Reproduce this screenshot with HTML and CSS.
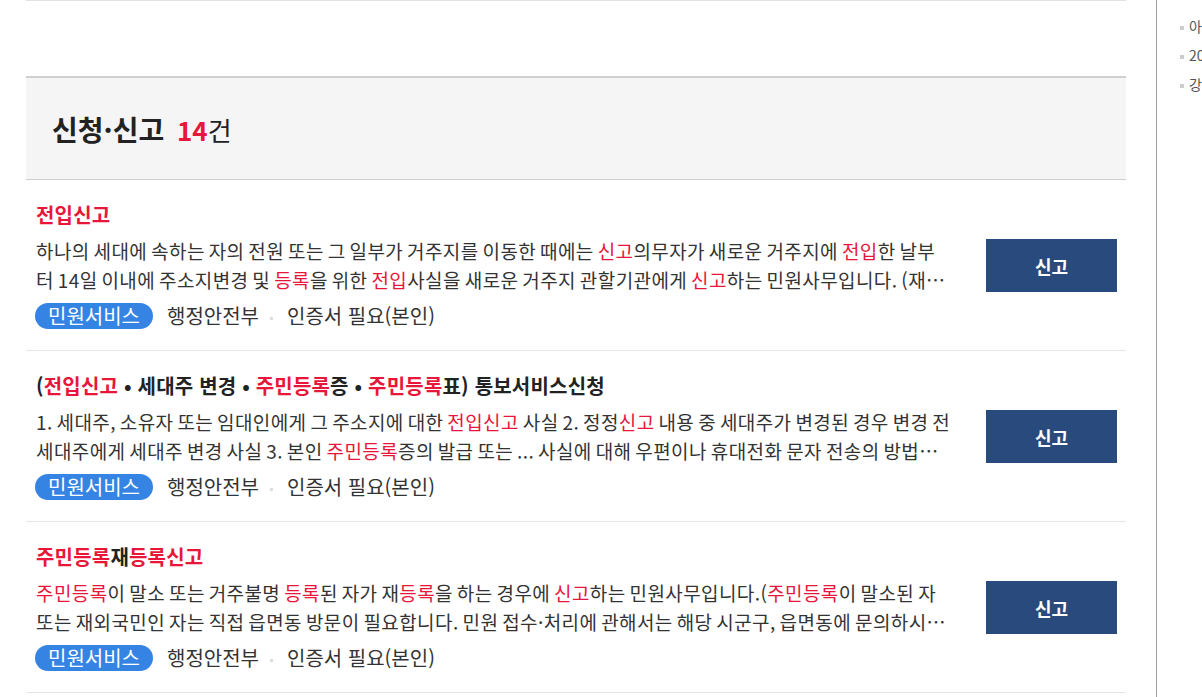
FILE: index.html
```html
<!DOCTYPE html>
<html lang="ko">
<head>
    <meta charset="UTF-8">
    <meta name="viewport" content="width=device-width, initial-scale=1.0">
    <title>신청·신고 검색결과</title>
    <link rel="stylesheet" href="styles.css">
</head>
<body>

<div class="page">
    <div class="main">
        <div class="prev-section"></div>

        <div class="result-head">
            <h2>신청·신고 <em>14</em><span>건</span></h2>
        </div>

        <ul class="result-list">
            <li class="result-item">
                <div class="result-text">
                    <h3 class="result-title"><mark>전입신고</mark></h3>
                    <p class="result-desc">하나의 세대에 속하는 자의 전원 또는 그 일부가 거주지를 이동한 때에는 <mark>신고</mark>의무자가 새로운 거주지에 <mark>전입</mark>한 날부터 14일 이내에 주소지변경 및 <mark>등록</mark>을 위한 <mark>전입</mark>사실을 새로운 거주지 관할기관에게 <mark>신고</mark>하는 민원사무입니다. (재외국민은 재외국민용 주민등록증 소지자만 신청 가능합니다.)</p>
                    <div class="result-meta">
                        <span class="badge">민원서비스</span>
                        <span class="meta-item">행정안전부</span>
                        <span class="meta-item">인증서 필요(본인)</span>
                    </div>
                </div>
                <button class="btn-apply">신고</button>
            </li>
            <li class="result-item">
                <div class="result-text">
                    <h3 class="result-title">(<mark>전입신고</mark> • 세대주 변경 • <mark>주민등록</mark>증 • <mark>주민등록</mark>표) 통보서비스신청</h3>
                    <p class="result-desc">1. 세대주, 소유자 또는 임대인에게 그 주소지에 대한 <mark>전입신고</mark> 사실 2. 정정<mark>신고</mark> 내용 중 세대주가 변경된 경우 변경 전 세대주에게 세대주 변경 사실 3. 본인 <mark>주민등록</mark>증의 발급 또는 ... 사실에 대해 우편이나 휴대전화 문자 전송의 방법으로 통보하는 서비스입니다.</p>
                    <div class="result-meta">
                        <span class="badge">민원서비스</span>
                        <span class="meta-item">행정안전부</span>
                        <span class="meta-item">인증서 필요(본인)</span>
                    </div>
                </div>
                <button class="btn-apply">신고</button>
            </li>
            <li class="result-item">
                <div class="result-text">
                    <h3 class="result-title"><mark>주민등록</mark>재<mark>등록신고</mark></h3>
                    <p class="result-desc"><mark>주민등록</mark>이 말소 또는 거주불명 <mark>등록</mark>된 자가 재<mark>등록</mark>을 하는 경우에 <mark>신고</mark>하는 민원사무입니다.(<mark>주민등록</mark>이 말소된 자 또는 재외국민인 자는 직접 읍면동 방문이 필요합니다. 민원 접수·처리에 관해서는 해당 시군구, 읍면동에 문의하시기 바랍니다.)</p>
                    <div class="result-meta">
                        <span class="badge">민원서비스</span>
                        <span class="meta-item">행정안전부</span>
                        <span class="meta-item">인증서 필요(본인)</span>
                    </div>
                </div>
                <button class="btn-apply">신고</button>
            </li>
        </ul>
    </div>

    <aside class="side">
        <ul class="side-list">
            <li>아동수당 신청</li>
            <li>2024년 연말정산</li>
            <li>강사료 지급</li>
        </ul>
    </aside>
</div>

</body>
</html>
```

FILE: styles.css
```css
html {
    overflow-x: hidden;
}
body {
    font-family: "Noto Sans CJK KR", "Noto Sans", sans-serif;
    background-color: #fff;
    color: #333;
    margin: 0;
}
ul {
    list-style: none;
    margin: 0;
    padding: 0;
}
.page {
    display: flex;
    min-height: 697px;
}
.main {
    width: 1100px;
    flex-shrink: 0;
    margin-left: 26px;
    margin-right: 30px;
}
.prev-section {
    height: 75px;
    border-top: 1px solid #e2e2e2;
}

/* 결과 헤더 */
.result-head {
    height: 101px;
    display: flex;
    align-items: center;
    padding-left: 26px;
    background-color: #f5f5f5;
    border-top: 2px solid #cfcfcf;
    border-bottom: 1px solid #cfcfcf;
}
.result-head h2 {
    margin: 0;
    font-size: 28px;
    font-weight: bold;
    color: #222;
}
.result-head em {
    font-style: normal;
    font-size: 26px;
    color: #e8173a;
    margin-left: 5px;
}
.result-head span {
    font-size: 26px;
    font-weight: normal;
}

/* 결과 목록 */
.result-item {
    display: flex;
    align-items: center;
    gap: 33px;
    padding: 22px 9px 21px 10px;
    border-bottom: 1px solid #e5e5e5;
}
.result-text {
    flex: 1;
    min-width: 0;
}
.result-title {
    margin: 0;
    font-size: 20px;
    line-height: 26px;
    font-weight: bold;
    letter-spacing: 0.2px;
    color: #222;
}
mark {
    background: none;
    color: #e8173a;
}
.result-desc {
    margin: 8px 0 9px 0;
    font-size: 19px;
    line-height: 29px;
    letter-spacing: 0.4px;
    word-spacing: -1.8px;
    color: #333;
    display: -webkit-box;
    -webkit-line-clamp: 2;
    -webkit-box-orient: vertical;
    overflow: hidden;
}
.result-meta {
    display: flex;
    align-items: center;
    font-size: 20px;
    line-height: 26px;
    color: #333;
}
.badge {
    background-color: #3584e4;
    color: #fff;
    height: 26px;
    padding: 0 13px;
    border-radius: 13px;
    margin-left: -1px;
    margin-right: 14px;
}
.meta-item + .meta-item::before {
    content: "";
    display: inline-block;
    width: 3px;
    height: 3px;
    background-color: #ddd;
    vertical-align: middle;
    margin: 0 14px 0 11px;
}
.btn-apply {
    flex-shrink: 0;
    width: 131px;
    height: 53px;
    border: none;
    background-color: #284a7c;
    color: #fff;
    font-family: inherit;
    font-size: 18px;
    font-weight: bold;
    cursor: pointer;
}

/* 오른쪽 사이드 */
.side {
    flex: 1;
    min-width: 0;
    overflow: hidden;
    border-left: 1px solid #a0a0a0;
}
.side-list {
    padding: 12px 0 0 23px;
}
.side-list li {
    font-size: 14px;
    line-height: 29px;
    color: #555;
    white-space: nowrap;
}
.side-list li::before {
    content: "";
    display: inline-block;
    width: 4px;
    height: 4px;
    background-color: #ccc;
    vertical-align: middle;
    margin-right: 5px;
}
```
